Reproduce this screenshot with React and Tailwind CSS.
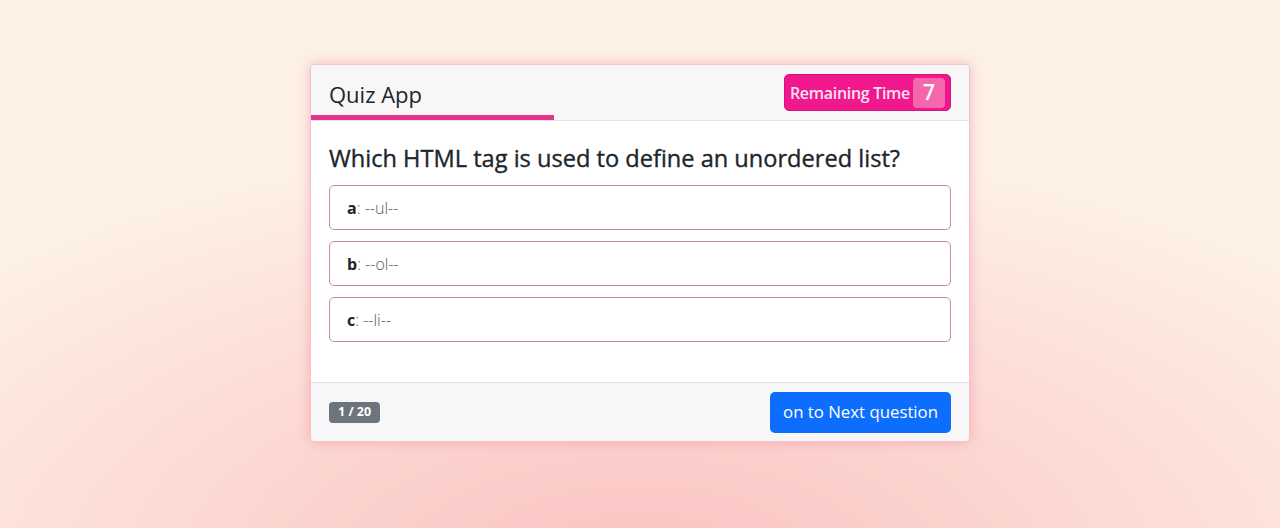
import React from "react";

export default function App() {
  const options = [
    { k: "a", v: "--ul--" },
    { k: "b", v: "--ol--" },
    { k: "c", v: "--li--" },
  ];
  return (
    <div
      className="w-full h-[528px] flex justify-center pt-16 bg-[radial-gradient(ellipse_70%_80%_at_50%_108%,#fbc2c2_0%,#fcd6d0_45%,#fdf0e4_100%)]"
      style={{ fontFamily: '"Open Sans", "Noto Sans", sans-serif' }}
    >
      <div className="w-[660px] h-[378px] flex flex-col bg-white rounded-[5px] border border-[#f3c4d0] shadow-[0_0_12px_rgba(240,110,150,0.45)] overflow-hidden">
        {/* header */}
        <div className="relative h-[56px] flex items-center justify-between px-[18px] bg-[#f7f7f7] border-b border-[#e3e3e3]">
          <span className="text-[22px] text-[#212529] leading-none mt-[2px]">Quiz App</span>
          <div className="flex items-center h-[37px] pl-[5px] pr-[5px] rounded-[5px] bg-[#f1178d] border border-[#d8147c]">
            <span className="text-[16px] font-semibold text-[#fde3f0] tracking-[-0.3px] mr-[3px]">Remaining Time</span>
            <span className="w-[32px] h-[30px] rounded-[4px] bg-[#f567ad] text-white text-[21px] font-semibold flex items-center justify-center">7</span>
          </div>
          <div className="absolute left-0 bottom-0 h-[5px] w-[243px] bg-[#e6328c]" />
        </div>
        {/* body */}
        <div className="flex-1 px-[18px] pt-[22px]">
          <h2 className="text-[23.6px] font-medium text-[#212529] leading-[30px] mb-[12px] [-webkit-text-stroke:0.35px_#212529]">
            Which HTML tag is used to define an unordered list?
          </h2>
          <div className="flex flex-col gap-[11px]">
            {options.map((o) => (
              <div
                key={o.k}
                className="h-[45px] flex items-center px-[17px] rounded-[5px] border border-[#c98a9a] text-[16px] text-[#212529]"
              >
                <span className="font-bold">{o.k}</span>
                <span className="font-light text-[#5a5a5a]">: {o.v}</span>
              </div>
            ))}
          </div>
        </div>
        {/* footer */}
        <div className="h-[59px] flex items-center justify-between px-[18px] bg-[#f7f7f7] border-t border-[#e3e3e3]">
          <span className="h-[21px] px-[9px] rounded-[4px] bg-[#6c757d] text-white text-[12.5px] font-bold flex items-center">1 / 20</span>
          <button className="h-[41px] px-[13px] rounded-[5px] bg-[#0d6efd] text-white text-[16.8px]">on to Next question</button>
        </div>
      </div>
    </div>
  );
}
